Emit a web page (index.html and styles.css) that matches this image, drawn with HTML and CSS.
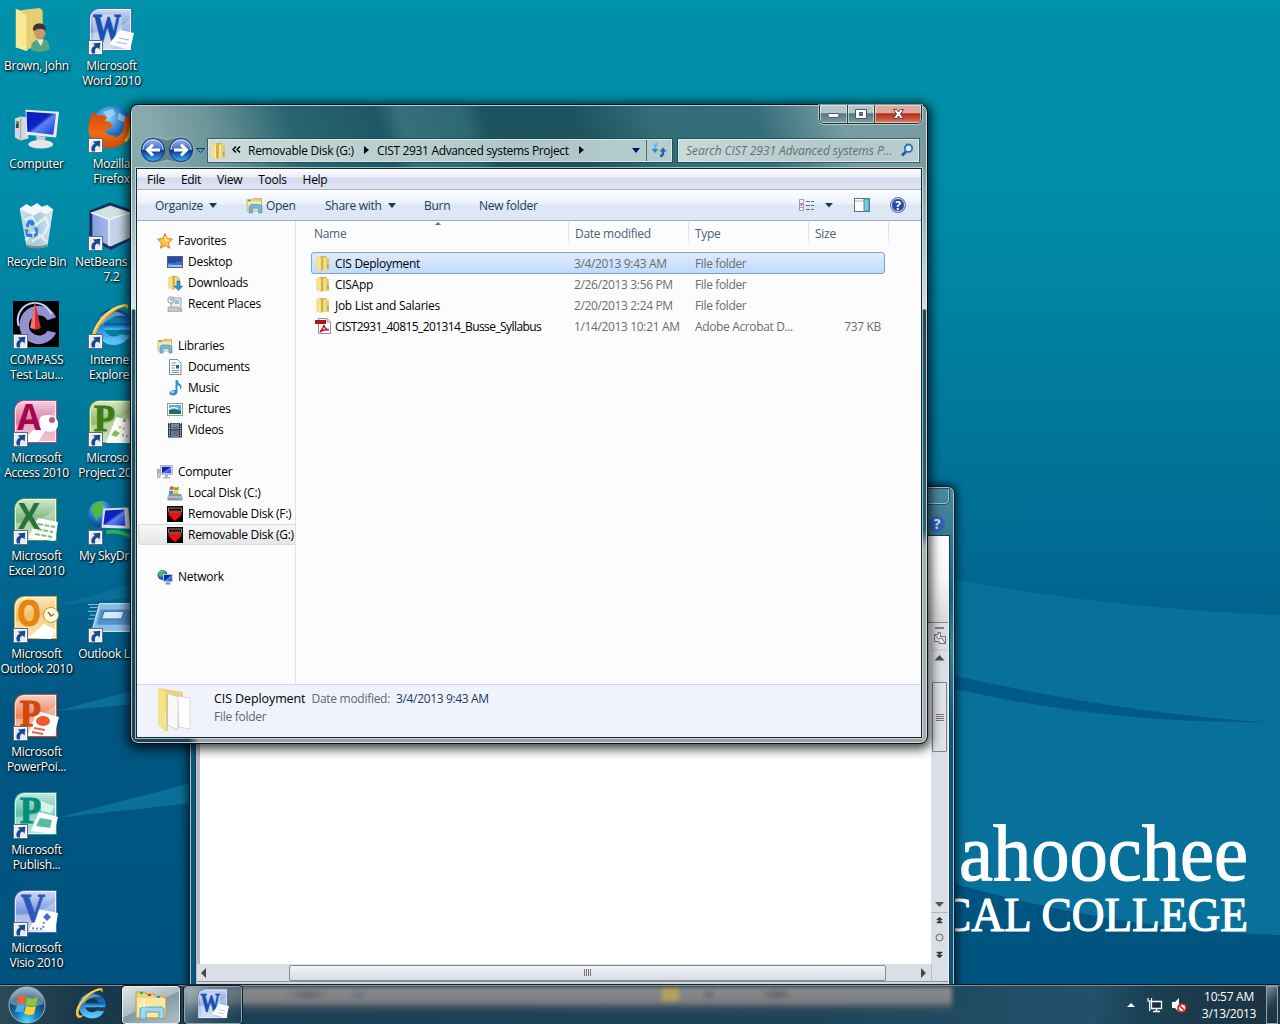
FILE: index.html
```html
<!DOCTYPE html>
<html lang="en">
<head>
<meta charset="utf-8">
<title>Desktop</title>
<link rel="stylesheet" href="styles.css">
</head>
<body>
<svg class="defs" width="0" height="0" aria-hidden="true">
<defs>
<linearGradient id="gSheen" x1="0" y1="0" x2="0" y2="1"><stop offset="0" stop-color="#fff" stop-opacity=".75"/><stop offset=".5" stop-color="#fff" stop-opacity=".3"/><stop offset="1" stop-color="#fff" stop-opacity=".55"/></linearGradient>
<linearGradient id="gFold" x1="0" y1="0" x2="1" y2="0"><stop offset="0" stop-color="#f9eca4"/><stop offset=".6" stop-color="#e8cf6b"/><stop offset="1" stop-color="#cfae43"/></linearGradient>
<linearGradient id="gScreen" x1="0" y1="0" x2="1" y2="1"><stop offset="0" stop-color="#0a1fae"/><stop offset=".45" stop-color="#0c22c8"/><stop offset=".55" stop-color="#5a86f0"/><stop offset="1" stop-color="#1331d8"/></linearGradient>
<radialGradient id="gGlobe" cx=".4" cy=".3" r=".8"><stop offset="0" stop-color="#8fd4f8"/><stop offset=".5" stop-color="#2272c4"/><stop offset="1" stop-color="#0a2a6a"/></radialGradient>
<linearGradient id="gFox" x1="0" y1="0" x2="0" y2="1"><stop offset="0" stop-color="#d9480d"/><stop offset=".6" stop-color="#ee6a14"/><stop offset="1" stop-color="#d1480c"/></linearGradient>
<linearGradient id="gE" x1="0" y1="0" x2="0" y2="1"><stop offset="0" stop-color="#0c4a86"/><stop offset=".5" stop-color="#1f86d8"/><stop offset="1" stop-color="#58c4f8"/></linearGradient>
<linearGradient id="gBtn" x1="0" y1="0" x2="0" y2="1"><stop offset="0" stop-color="#9fbfe8"/><stop offset=".48" stop-color="#3c6cc0"/><stop offset=".5" stop-color="#0a2f90"/><stop offset="1" stop-color="#3ab0f8"/></linearGradient>
<linearGradient id="gCubeL" x1="0" y1="0" x2="1" y2="0"><stop offset="0" stop-color="#7f9ee0"/><stop offset="1" stop-color="#d4e0f4"/></linearGradient>
<radialGradient id="gOrb" cx=".5" cy=".95" r=".9"><stop offset="0" stop-color="#4fe0ff"/><stop offset=".35" stop-color="#1a7db8"/><stop offset=".75" stop-color="#123f66"/><stop offset="1" stop-color="#6a93ad"/></radialGradient>
<linearGradient id="gBin" x1="0" y1="0" x2="1" y2="0"><stop offset="0" stop-color="#dbe8ef"/><stop offset=".5" stop-color="#b4cfdf"/><stop offset="1" stop-color="#e4eef4"/></linearGradient>

<symbol id="cut" viewBox="0 0 15 15"><rect x=".5" y=".5" width="14" height="14" fill="#e4ebf3" stroke="#5f6b7c"/><rect x="1.5" y="1.5" width="12" height="12" fill="none" stroke="#fafcff"/><path d="M4 13.5C2.600 9.500 4 6.800 6.800 5.700L5 3.400 12.300 2.700 11.600 9.500 9.600 7.600C7 8.400 6.600 10.300 7.200 13.500Z" fill="#1d4690"/></symbol>
<symbol id="tile" viewBox="0 0 46 46"><path d="M11 1H44V44H1V11Q2 2 11 1Z" fill="currentColor"/><path d="M11.500 2H43V43H2V11.500Q3 3 11.500 2Z" fill="url(#gSheen)"/><path d="M11.500 2.500H42.500V42.500H2.500V11.500Q3 3 11.500 2.500Z" fill="none" stroke="#fff" stroke-opacity=".75"/><path d="M2 26Q26 26 43 12V43H2Z" fill="#fff" opacity=".3"/></symbol>
<symbol id="folder" viewBox="0 0 16 16"><path d="M1.500 2L6 .5 9 2V15L4 15.500 1.500 14Z" fill="#f0dc84"/><path d="M5.500 1H11.500V14.500L5.500 15.500Z" fill="#d3b346"/><path d="M8.500 2L13.500 3 14 14.500 8.500 15.500Z" fill="url(#gFold)"/><path d="M1.500 2L5.500 3.500V15.500L1.500 14Z" fill="#f3e08a"/><path d="M5 3V15" stroke="#fbf2b8" stroke-width=".8"/><rect x="12.200" y="9.500" width="1.300" height="3" fill="#6fa5c8"/></symbol>
<symbol id="openfolder" viewBox="0 0 16 16"><path d="M1 2.500H6L7 1.500H14.500V13H1Z" fill="#e7d27c" stroke="#bfa24a" stroke-width=".7"/><rect x="1.500" y="4" width="12.500" height="8.500" fill="#f8eba8"/><rect x="2" y="2.800" width="2.500" height="1.200" fill="#38b749"/><path d="M3 15V8.500L5 7H12L15 8.500V15H12V10.500H6V15Z" fill="#6fb9e2" stroke="#4a93c4" stroke-width=".7"/></symbol>
<symbol id="pc" viewBox="0 0 16 16"><rect x=".5" y="5.500" width="2.500" height="8" fill="#cfd4d8" stroke="#8a9095" stroke-width=".6"/><rect x=".8" y="7" width="1.200" height="2" fill="#4dbb3c"/><rect x="3.500" y="1.500" width="12" height="9" fill="#dde1e6" stroke="#9aa0a8" stroke-width=".7"/><rect x="5" y="2.800" width="9" height="6.400" fill="url(#gScreen)"/><path d="M8 11H11V13H13.500V14.500H6V13H8Z" fill="#b4b9bf"/></symbol>
<symbol id="reddisk" viewBox="0 0 16 16"><rect width="16" height="16" fill="#050505"/><path d="M1.500 5.500V2H14.500V5.500" stroke="#888" fill="none"/><path d="M2.500 3.500H13.500V5H2.500Z" fill="#900"/><path d="M1.500 7H14.500V9L8 15 1.500 9Z" fill="#f80a0a"/><path d="M1.500 6H14.500" stroke="#ccc" stroke-width=".9"/></symbol>
<symbol id="ie" viewBox="0 0 48 48"><circle cx="27" cy="27" r="14.500" fill="none" stroke="url(#gE)" stroke-width="9"/><path d="M17 23.500H44V30H17Z" fill="url(#gE)"/><path d="M33 30H47V36L31 34.500Z" fill="currentColor"/><path d="M12 17Q24 5 40 16Q28 12 14 25Z" fill="#dff3ff" opacity=".4"/><path d="M7 45C-3 35 17 5 39 3C42 3 43 5 41 9L39 6C24 8 7 28 8 39Q9 43 16 41Q11 46 7 45Z" fill="#f4bb1c"/><path d="M6 42C1 30 21 6 39 4" fill="none" stroke="#ffe684" stroke-width="1.200"/></symbol>
<symbol id="word" viewBox="0 0 46 46"><use href="#tile" width="46" height="46"/><path d="M4 12Q14 4 34 10V30L24 42H6Z" fill="#fff" opacity=".35"/><text x="5" y="34" class="letter" font-size="39" textLength="28" lengthAdjust="spacingAndGlyphs" fill="#1650b4" stroke="#1650b4">W</text><path d="M32 23L46 26 42 43 21 37Z" fill="#fff"/><path d="M31 31L41 33M29 35L39 37" stroke="#9fb0df"/></symbol>
</defs>
</svg>

<main class="desktop">
<svg class="wallpaper" width="1280" height="1024" viewBox="0 0 1280 1024">
<defs><linearGradient id="gWall" x1="0" y1="0" x2="0" y2="1"><stop offset="0" stop-color="#0091ab"/><stop offset=".2" stop-color="#008ca8"/><stop offset=".42" stop-color="#00769a"/><stop offset=".56" stop-color="#006892"/><stop offset=".7" stop-color="#005682"/><stop offset="1" stop-color="#00537f"/></linearGradient></defs>
<rect width="1280" height="1024" fill="url(#gWall)"/>
<path d="M300 560Q600 520 955 580Q1120 609 1280 615V935Q1120 930 955 884Q600 780 300 780Z" fill="#07719b"/>
<path d="M56 606L135 583V597ZM56 711L135 690V704ZM56 818L192 783V803Z" fill="#0a6f9a"/>
<path d="M900 663Q1100 712 1266 722Q1090 725 900 676Z" fill="#005a89"/>
<g class="brand" fill="#fff"><text x="959" y="880" font-size="80" textLength="289" lengthAdjust="spacingAndGlyphs">ahoochee</text><text x="941" y="931" font-size="48" textLength="307" lengthAdjust="spacingAndGlyphs">CAL COLLEGE</text></g>
</svg>

<div class="shortcut" style="left:0;top:0"><svg viewBox="0 0 48 48"><path d="M3 2L15 6V46L3 42Z" fill="#f7e9a0"/><path d="M9 3L28 1 31 4V38L13 45Z" fill="#e6cd72"/><path d="M3 2L14 9V46L3 42Z" fill="#f8e996"/><path d="M19 45Q18 35 27 34L34 34Q39 37 38 44Q29 49 19 45Z" fill="#58a481"/><ellipse cx="28" cy="26" rx="6" ry="8" fill="#c79a68"/><path d="M21 25Q20 17 28 17Q36 18 34 26Q31 20 21 25Z" fill="#393634"/><path d="M25 34L29 41 32 34Z" fill="#d9efe6"/></svg><span>Brown, John</span></div>
<div class="shortcut" style="left:0;top:98px"><svg viewBox="0 0 48 48"><path d="M2 14L8 12 16 13V35L8 37 2 34Z" fill="#d4d9dd"/><path d="M8 13V36" stroke="#969ea6"/><rect x="3" y="17" width="3" height="7" fill="#3c4247"/><circle cx="4" cy="18.500" r="1" fill="#58e021"/><path d="M13 5L48 7 45 34 14 31Z" fill="#e8ebee"/><path d="M14 7L45 9 42 31 15 28Z" fill="url(#gScreen)"/><path d="M24 32L34 33 33 40H25Z" fill="#c6ccd2"/><ellipse cx="29" cy="41" rx="13" ry="4.500" fill="#e4e8eb"/></svg><span>Computer</span></div>
<div class="shortcut" style="left:0;top:196px"><svg viewBox="0 0 48 48"><path d="M7 6L42 6 36 45Q25 49 14 45Z" fill="url(#gBin)" opacity=".93"/><path d="M7 6L14 1 19 4 25 0 30 4 36 2 42 7 35 12 28 9 22 13 14 10Z" fill="#f4f8fa"/><path d="M12 18L20 14 24 23 34 15 37 24 31 34 20 31 13 39M20 40L29 35 35 40" fill="none" stroke="#fff" stroke-width="2.500" opacity=".6"/><path d="M13 24L16 18 21 18 23 22 20 24 17 22 16 26ZM12 27L16 28 15 32 20 32V36L14 35ZM22 25L26 26 26 33 22 36 22 32 24 31Z" fill="#2f7dd8"/><path d="M14 43Q25 47 36 43L35 46Q25 49 15 46Z" fill="#85898c"/></svg><span>Recycle Bin</span></div>
<div class="shortcut" style="left:0;top:294px"><svg viewBox="0 0 48 48"><rect width="48" height="48" fill="#030303"/><path d="M45 17A20 20 0 1 0 45 33L36 31A10.500 10.500 0 1 1 36 20Z" fill="#9291d2"/><path d="M40 14A18 18 0 0 0 6 26" fill="none" stroke="#d1d1fa" stroke-width="2"/><path d="M23 1L29 28Q23 32 18 28Z" fill="#cf2f2d"/><path d="M23 1L23 29 18 28Z" fill="#ee7770"/></svg><svg class="arrow"><use href="#cut"/></svg><span>COMPASS<br>Test Lau...</span></div>
<div class="shortcut access" style="left:0;top:392px"><svg viewBox="0 0 46 46"><use href="#tile" width="46" height="46"/><path d="M14 37L27 25Q24 15 36 16Q46 17 45 27Q42 35 32 32L25 43H10Z" fill="#fff"/><circle cx="39" cy="21" r="3" fill="#c85287"/><text x="4" y="31" class="letter sans" font-size="36" textLength="24" lengthAdjust="spacingAndGlyphs" fill="#a60550">A</text></svg><svg class="arrow"><use href="#cut"/></svg><span>Microsoft<br>Access 2010</span></div>
<div class="shortcut excel" style="left:0;top:490px"><svg viewBox="0 0 46 46"><use href="#tile" width="46" height="46"/><path d="M25 21L45 25 42 44 15 41Z" fill="#fff"/><path d="M25 27L42 30M24 32L40 35M22 37L39 40" stroke="#7bbd73" stroke-width="2" stroke-dasharray="5 1.500"/><text x="5" y="32" class="letter sans" font-size="36" textLength="22" lengthAdjust="spacingAndGlyphs" fill="#277236">X</text></svg><svg class="arrow"><use href="#cut"/></svg><span>Microsoft<br>Excel 2010</span></div>
<div class="shortcut outlook" style="left:0;top:588px"><svg viewBox="0 0 46 46"><use href="#tile" width="46" height="46"/><path d="M15 43L31 29 43 35 38 44Z" fill="#fff"/><circle cx="38" cy="20" r="7.500" fill="#fffbe8" stroke="#c99428"/><path d="M35 17L38 21 41 19" fill="none" stroke="#a66a0a" stroke-width="1.500"/><text x="4" y="31" class="letter sans" font-size="36" textLength="24" lengthAdjust="spacingAndGlyphs" fill="#e58512" stroke="#e58512">O</text></svg><svg class="arrow"><use href="#cut"/></svg><span>Microsoft<br>Outlook 2010</span></div>
<div class="shortcut powerpoint" style="left:0;top:686px"><svg viewBox="0 0 46 46"><use href="#tile" width="46" height="46"/><path d="M24 18L46 24 41 43 15 42Z" fill="#fff"/><ellipse cx="30" cy="28" rx="7" ry="5" fill="#f0592b"/><path d="M21 35L32 37M19 39L30 41" stroke="#e06a49" stroke-width="2"/><text x="7" y="33" class="letter" font-size="38" textLength="21" lengthAdjust="spacingAndGlyphs" fill="#d2480a" stroke="#d2480a">P</text></svg><svg class="arrow"><use href="#cut"/></svg><span>Microsoft<br>PowerPoi...</span></div>
<div class="shortcut publisher" style="left:0;top:784px"><svg viewBox="0 0 46 46"><use href="#tile" width="46" height="46"/><path d="M28 10L41 15 38 22 28 20Z" fill="#d7f3ec"/><path d="M26 21L45 26 41 43 18 40Z" fill="#fff"/><path d="M27 27L39 29 37 37 23 35Z" fill="#57bca5"/><text x="7" y="32" class="letter" font-size="38" textLength="21" lengthAdjust="spacingAndGlyphs" fill="#078c77" stroke="#078c77">P</text></svg><svg class="arrow"><use href="#cut"/></svg><span>Microsoft<br>Publish...</span></div>
<div class="shortcut visio" style="left:0;top:882px"><svg viewBox="0 0 46 46"><use href="#tile" width="46" height="46"/><path d="M25 20L45 24 42 42 16 41Z" fill="#fff"/><path d="M34 24L38 28 34 32 30 28Z" fill="#4968d8"/><path d="M31 33L30 40 17 39" fill="none" stroke="#6683de" stroke-width="2" stroke-dasharray="2 2"/><text x="8" y="32" class="letter" font-size="39" textLength="24" lengthAdjust="spacingAndGlyphs" fill="#2f55be" stroke="#2f55be">V</text></svg><svg class="arrow"><use href="#cut"/></svg><span>Microsoft<br>Visio 2010</span></div>

<div class="shortcut word" style="left:75px;top:0"><svg><use href="#word"/></svg><svg class="arrow"><use href="#cut"/></svg><span>Microsoft<br>Word 2010</span></div>
<div class="shortcut" style="left:75px;top:98px"><svg viewBox="0 0 48 48"><circle cx="25" cy="22" r="21" fill="url(#gGlobe)"/><path d="M16 7L26 4 29 9 22 14ZM32 8L39 12 38 18 31 15Z" fill="#a9dcf2" opacity=".7"/><path d="M2 16Q3 9 6 7L9 11Q17 9 20 13L17 17Q26 17 25 23L17 27Q22 33 30 32Q25 33 28 34Q39 30 37 19Q39 10 45 10Q50 31 37 41Q21 50 7 40Q-3 30 2 16Z" fill="url(#gFox)"/><path d="M39 38Q46 30 45 18" stroke="#ffd24d" stroke-width="3" fill="none"/></svg><svg class="arrow"><use href="#cut"/></svg><span>Mozilla<br>Firefox</span></div>
<div class="shortcut" style="left:75px;top:196px"><svg viewBox="0 0 48 48"><path d="M3 9L23 1 46 9V36L24 47 3 37Z" fill="url(#gCubeL)" stroke="#1b2c5f" stroke-width="3"/><path d="M3 10L23 3 44 10 22 17Z" fill="#cfe3df"/><path d="M22 17L45 10V36L23 45Z" fill="#c4d4e6"/><path d="M22 17V45M3 10L22 17 45 10" stroke="#f5faff" stroke-width="1.500" fill="none"/></svg><svg class="arrow"><use href="#cut"/></svg><span>NetBeans IDE<br>7.2</span></div>
<div class="shortcut skyie" style="left:75px;top:294px"><svg><use href="#ie"/></svg><svg class="arrow"><use href="#cut"/></svg><span>Internet<br>Explorer</span></div>
<div class="shortcut project" style="left:75px;top:392px"><svg viewBox="0 0 46 46"><use href="#tile" width="46" height="46"/><path d="M28 18L48 22V44H18Z" fill="#fff"/><path d="M27 31L32 34 28 38 23 36ZM35 20H38V23H35Z" fill="#8dba5b"/><path d="M31 28L37 30M34 36L42 38" stroke="#9ac265" stroke-width="2" stroke-dasharray="2 2"/><text x="6" y="32" class="letter" font-size="38" textLength="21" lengthAdjust="spacingAndGlyphs" fill="#3c7b18" stroke="#3c7b18">P</text></svg><svg class="arrow"><use href="#cut"/></svg><span>Microsoft<br>Project 2010</span></div>
<div class="shortcut" style="left:75px;top:490px"><svg viewBox="0 0 48 48"><circle cx="14" cy="18" r="14" fill="url(#gGlobe)"/><path d="M3 12Q9 3 17 5L14 11 18 16 11 19 9 25Z" fill="#4fba38"/><path d="M16 12L42 11 44 33 14 32Z" fill="#dce4ef"/><path d="M18 14L38 13 39 30 16 29Z" fill="url(#gScreen)"/><path d="M19 37Q31 34 46 42" stroke="#28b64c" stroke-width="4" fill="none"/></svg><svg class="arrow"><use href="#cut"/></svg><span>My SkyDrive</span></div>
<div class="shortcut" style="left:75px;top:588px"><svg viewBox="0 0 48 48"><path d="M12 9H50L44 38H4Z" fill="#8bbde4" stroke="#e3f2fd"/><path d="M13 15H50V31H9Z" fill="#4b93ce"/><path d="M17 17H38L35 25H14Z" fill="#d6e8f5" stroke="#30619a"/><path d="M0 10H12M2 13H10M0 17H9M2 21H8M0 25H7" stroke="#bce0f4" opacity=".8"/></svg><svg class="arrow"><use href="#cut"/></svg><span>Outlook Live</span></div>

<section class="wordwin">
  <div class="word-head"><span class="word-btn"></span><span class="help">?</span></div>
  <div class="word-body">
    <div class="page"></div>
    <div class="vscroll"><div class="ribbon-end"></div>
      <svg width="17" height="58" viewBox="0 0 17 58"><path d="M4 5H13" stroke="#666" stroke-width="1.500"/><path d="M3.500 11.500H7V9.500H9.500V13.500H14.500V20.500H8V18.500H3.500Z" fill="#eee6e8" stroke="#77727a"/><path d="M4 12L7.500 16 11 15 14 20" stroke="#77727a" fill="none"/><path d="M1 27H16" stroke="#bbc0ca"/><path d="M3.500 37.500L8.500 32 13.500 37.500Z" fill="#4d4e52"/></svg>
      <div class="vthumb"><i></i><i></i><i></i><i></i></div>
      <svg class="vend" width="17" height="64" viewBox="0 0 17 64"><path d="M4 2H13L8.500 7Z" fill="#55565a"/><path d="M0 12.500H17" stroke="#b2b8c2"/><path d="M5.500 20L8.500 17 11.500 20ZM5.500 23L8.500 20 11.500 23ZM5.500 52L8.500 55 11.500 52ZM5.500 55L8.500 58 11.500 55Z" fill="#333" stroke="#333" stroke-width=".4"/><circle cx="8.500" cy="37.500" r="3.500" fill="#d6d9df" stroke="#66686c"/></svg>
    </div>
    <div class="hscroll"><b class="tri-l"></b><div class="hthumb"><i></i><i></i><i></i><i></i></div><b class="tri-r"></b></div>
    <div class="corner"></div>
  </div>
</section>

<section class="explorer">
  <header class="caption">
    <div class="winbtns"><span class="min"><svg viewBox="0 0 28 18"><rect x="8.500" y="8.500" width="11" height="4" rx="1" fill="#fff" stroke="#4a565c"/></svg></span><span class="max"><svg viewBox="0 0 26 18"><path d="M7.500 4.500H18.500V13.500H7.500ZM11.500 7.500H14.500V10.500H11.500Z" fill="#fff" fill-rule="evenodd" stroke="#4a565c"/></svg></span><span class="close"><svg viewBox="0 0 46 18"><path d="M18.500 4.500H21.500L23.500 7 25.500 4.500H28.500L25.500 9 28.500 13.500H25.500L23.500 11 21.500 13.500H18.500L21.500 9Z" fill="#fff" stroke="#4a4a55"/></svg></span></div>
    <div class="nav">
      <svg class="navbtns" width="68" height="28" viewBox="0 0 68 28"><path d="M14 1Q20 1 28 4 36 1 42 1A13 13 0 0 1 42 27Q36 27 28 24 20 27 14 27A13 13 0 0 1 14 1Z" fill="#173d48" opacity=".35" stroke="#c3d8da"/><g stroke="#15357b"><circle cx="14" cy="14" r="11.500" fill="url(#gBtn)"/><circle cx="42" cy="14" r="11.500" fill="url(#gBtn)"/></g><path d="M3.800 14A10.200 10.200 0 0 1 24.200 14M31.800 14A10.200 10.200 0 0 1 52.200 14" fill="none" stroke="#d5e6ff" opacity=".8"/><path d="M21 14H9M14 8.500L8.500 14 14 19.500M35 14H47M42 8.500L47.500 14 42 19.500" fill="none" stroke="#fff" stroke-width="3"/><path d="M57.500 12.500H65.500L61.500 16.500Z" fill="#4aa9df" stroke="#103c57"/></svg>
      <div class="address"><svg width="17" height="17"><use href="#folder"/></svg><svg class="chev" width="9" height="8" viewBox="0 0 9 8"><path d="M4 .5L1 3.500 4 6.500M8 .5L5 3.500 8 6.500" fill="none" stroke="#000" stroke-width="1.500"/></svg><span class="crumb1">Removable Disk (G:)</span><b class="tri-r small"></b><span class="crumb2">CIST 2931 Advanced systems Project</span><b class="tri-r small"></b><b class="tri-d navy"></b><span class="refresh"><svg width="16" height="16" viewBox="0 0 16 16"><path d="M6.500 2Q4 2 4 5V7" fill="none" stroke="#62b8ec" stroke-width="2.400"/><path d="M.5 7H7.500L4 11Z" fill="#2f86d0"/><path d="M9 14Q12 14 12 11V9" fill="none" stroke="#2463b8" stroke-width="2.400"/><path d="M8.500 9.500H15.500L12 5.500Z" fill="#2463b8"/></svg></span></div>
      <div class="search"><em>Search CIST 2931 Advanced systems P...</em><svg width="14" height="14" viewBox="0 0 14 14"><path d="M6.500 8L2 12.500" stroke="#1d5ba8" stroke-width="2.600"/><circle cx="8.500" cy="5.200" r="3.700" fill="#dcebf0" stroke="#2670bd" stroke-width="1.800"/></svg></div>
    </div>
  </header>
  <div class="client">
    <nav class="menubar"><span>File</span><span>Edit</span><span>View</span><span>Tools</span><span>Help</span></nav>
    <div class="toolbar"><span class="t1">Organize <b class="tri-d"></b></span><span class="t2"><svg width="17" height="17"><use href="#openfolder"/></svg>Open</span><span class="t3">Share with <b class="tri-d"></b></span><span class="t4">Burn</span><span class="t5">New folder</span>
      <svg class="tools" width="110" height="18" viewBox="0 0 110 18"><path d="M.5 3.500H4.500V14.500H.5ZM.5 7.500H4.500M.5 11.500H4.500" fill="#fff" stroke="#9a9faf"/><circle cx="2.500" cy="9" r="1" fill="#d33"/><path d="M7 5.500H15M7 9.500H15M7 13.500H15" stroke="#667085" stroke-dasharray="4 1"/><path d="M26 7H34L30 11.500Z" fill="#1e395b"/><rect x="55.500" y="2.500" width="15" height="13" fill="#fff" stroke="#617286"/><path d="M56 5H65" stroke="#a7b6c5"/><rect x="65" y="3" width="5" height="12" fill="#78c9dc" stroke="#3d91a8"/><circle cx="99" cy="9" r="7.500" fill="#2747ae" stroke="#777d85"/><circle cx="99" cy="9" r="6.500" fill="none" stroke="#dbe0f0"/><text x="99" y="13.500" text-anchor="middle" class="q">?</text></svg>
    </div>
    <div class="main">
      <aside class="tree">
        <div class="node"><svg viewBox="0 0 16 16"><path d="M8 .5L10.200 5.500 15.500 6.200 11.500 10 12.500 15.200 8 12.500 3.500 15.200 4.500 10 .5 6.200 5.800 5.500Z" fill="#fbc63e" stroke="#e0782c"/><path d="M8 2.500L9.500 6.500 13 7 8 9Z" fill="#fff2a4"/></svg>Favorites</div>
        <div class="node sub"><svg viewBox="0 0 16 16"><rect x=".5" y="2.500" width="15" height="11" fill="#3d6fd0" stroke="#5a6068"/><path d="M1 3H15V7L1 10Z" fill="#234ba7"/><path d="M1 12H15" stroke="#c5dced" stroke-width="1.500"/><circle cx="3" cy="11" r="1.700" fill="#49b1e5"/></svg>Desktop</div>
        <div class="node sub"><svg viewBox="0 0 16 16"><use href="#folder" width="15" height="15"/><path d="M10 6H13V11H15.500L11.500 15.500 7.500 11H10Z" fill="#2d93dc" stroke="#1767a5" stroke-width=".6"/></svg>Downloads</div>
        <div class="node sub"><svg viewBox="0 0 16 16"><path d="M4 2H14V12H4Z" fill="#e7eef2" stroke="#8ba0ab"/><path d="M1 11H11V13H15V15.500H1Z" fill="#c3c8cb" stroke="#8f969b" stroke-width=".6"/><circle cx="4" cy="4" r="3.200" fill="#f2f5f7" stroke="#8998a2"/><path d="M4 2V4H6M8 5H12M8 7H12" stroke="#5d819c" fill="none"/></svg>Recent Places</div>
        <div class="node gap"></div>
        <div class="node"><svg><use href="#openfolder"/></svg>Libraries</div>
        <div class="node sub"><svg viewBox="0 0 16 16"><path d="M2.500 .5H10.500L14 4V15.500H2.500Z" fill="#fff" stroke="#7d8b94"/><path d="M4.500 4H9M4.500 6.500H8M4.500 9H8M4.500 11.500H12M4.500 13.500H12" stroke="#7993ac"/><rect x="9" y="6" width="3" height="3.500" fill="#235bb0"/></svg>Documents</div>
        <div class="node sub"><svg viewBox="0 0 16 16"><path d="M8.500 0H10.500Q11 3 14 5Q15.500 8 13 10Q14 6 10.500 5V12Q10 15.500 5.500 15.500Q1.500 15 2.500 12Q4.500 9.500 8.500 10Z" fill="#2e91d1"/><ellipse cx="5.500" cy="12" rx="2" ry="1.300" fill="#9bd2f3"/></svg>Music</div>
        <div class="node sub"><svg viewBox="0 0 16 16"><rect x=".5" y="2.500" width="15" height="12" fill="#fff" stroke="#919ba2"/><rect x="2" y="4" width="12" height="9" fill="#5aafe0"/><path d="M2 9Q8 7 14 10V13H2Z" fill="#216d5e"/><path d="M2 8Q7 5 11 8" stroke="#e7f5fc" fill="none" stroke-width="1.500"/></svg>Pictures</div>
        <div class="node sub"><svg viewBox="0 0 16 16"><rect x="1" y="1" width="14" height="14.500" fill="#263139"/><rect x="4" y="1.500" width="8" height="6" fill="#5697cb"/><rect x="4" y="8.500" width="8" height="6.500" fill="#4982b5"/><path d="M2.500 1V15.500M13.500 1V15.500" stroke="#e1e8ed" stroke-width="1.200" stroke-dasharray="1.200 1.200"/><path d="M5 3L8 5 11 3V7H6ZM7 10L10 9 11 14 7 13Z" fill="#9e5947"/></svg>Videos</div>
        <div class="node gap"></div>
        <div class="node"><svg><use href="#pc"/></svg>Computer</div>
        <div class="node sub"><svg viewBox="0 0 16 16"><path d="M2 9H14L15.500 12V15.500H.5V12Z" fill="#8b989e"/><path d="M1 12H15" stroke="#d0dadd"/><path d="M3 2Q5 .5 7 2L6.500 5Q4.500 4 2.500 5Z" fill="#e8562a"/><path d="M7.500 2Q10 3 12 1.500L11.500 5Q9 6 7 5Z" fill="#77b92b"/><path d="M2 6Q4.500 5 6.500 6L6 9H2Z" fill="#3598d9"/><path d="M7 6Q9 7 11.500 6L11 9H6.500Z" fill="#f5bd20"/><rect x="12" y="13" width="2" height="1.500" fill="#54d5de"/></svg>Local Disk (C:)</div>
        <div class="node sub"><svg><use href="#reddisk"/></svg>Removable Disk (F:)</div>
        <div class="node sub current"><svg><use href="#reddisk"/></svg>Removable Disk (G:)</div>
        <div class="node gap"></div>
        <div class="node"><svg viewBox="0 0 16 16"><circle cx="5.500" cy="6" r="5" fill="url(#gGlobe)"/><path d="M2 4Q5 1 8 2L6 5 3 8Z" fill="#54b941"/><rect x="6.500" y="5.500" width="9" height="7" fill="url(#gScreen)" stroke="#c4ccda"/><path d="M9 13H13V14.500H14V15.500H8V14.500H9Z" fill="#9199aa"/></svg>Network</div>
      </aside>
      <div class="files">
        <div class="row head"><span>Name</span><span>Date modified</span><span>Type</span><span>Size</span><i class="sort"></i></div>
        <div class="row selected"><span><svg><use href="#folder"/></svg>CIS Deployment</span><span>3/4/2013 9:43 AM</span><span>File folder</span><span></span></div>
        <div class="row"><span><svg><use href="#folder"/></svg>CISApp</span><span>2/26/2013 3:56 PM</span><span>File folder</span><span></span></div>
        <div class="row"><span><svg><use href="#folder"/></svg>Job List and Salaries</span><span>2/20/2013 2:24 PM</span><span>File folder</span><span></span></div>
        <div class="row"><span class="long"><svg viewBox="0 0 16 16"><path d="M3.500 .5H12L15.500 4V15.500H3.500Z" fill="#fff" stroke="#929292"/><path d="M12 .5V4H15.500" fill="#ddd" stroke="#999"/><rect y="2" width="11" height="4" fill="#b3121d"/><path d="M5 14Q8 11 9 7Q9.500 11 14 12Q9 11 5 14Z" fill="none" stroke="#c01b25" stroke-width="1.400"/></svg>CIST2931_40815_201314_Busse_Syllabus</span><span>1/14/2013 10:21 AM</span><span>Adobe Acrobat D...</span><span>737 KB</span></div>
      </div>
    </div>
    <footer class="details"><svg width="36" height="46" viewBox="0 0 36 46"><path d="M2 1L26 5V12L10 14Z" fill="#e9d27b"/><path d="M20 9L33 11V42L22 40Z" fill="#fff" stroke="#c9ccd2" stroke-width=".7"/><path d="M10 6L21 10V43L10 38Z" fill="#f9f9f8" stroke="#bbb" stroke-width=".6"/><path d="M1 1L10 6V25L8 27 9 45 1 38Z" fill="#f6e388"/><path d="M10 7V44" stroke="#c3a95b"/></svg><div><p><strong>CIS Deployment</strong><span>Date modified:</span><em>3/4/2013 9:43 AM</em></p><p><span>File folder</span></p></div></footer>
  </div>
</section>

<footer class="taskbar">
  <div class="blurred"></div>
  <svg class="orb" viewBox="0 0 40 40"><circle cx="20" cy="20" r="18" fill="url(#gOrb)" stroke="#98b7c6"/><path d="M3 19A17 17 0 0 1 37 19Q20 25 3 19Z" fill="#d5e6ee" opacity=".38"/><path d="M11 12Q15 9 19 12L18 19Q14 17 10 19Z" fill="#f0642c"/><path d="M20 12.500Q25 15 31 12L29 20Q24 22 19 19.500Z" fill="#8cc83c"/><path d="M10 20.500Q14 18 18 20.500L16 28Q12 26 8 27Z" fill="#4eabe6"/><path d="M19 21Q24 23 29 21L27 29Q22 31 17 28.500Z" fill="#fdd03b"/></svg>
  <svg class="tie" viewBox="0 0 48 48"><use href="#ie"/></svg>
  <div class="task active"><svg width="34" height="32" viewBox="0 0 34 32"><path d="M2 3H11L12 5H20L21 7H29L30 9H32V29H2Z" fill="#e9d477" stroke="#b99f4b"/><path d="M3 9H31V28H3Z" fill="#f8e9a0"/><path d="M6 4H9" stroke-width="2" stroke="#35ad40"/><path d="M14 6H17" stroke="#d53d2f" stroke-width="2"/><path d="M23 8H26" stroke="#2c8fd8" stroke-width="2"/><path d="M6 30V20L8 18H28L30 20V30H25V23H12V30Z" fill="#9dd8ee" stroke="#609fbd"/><path d="M10 10V20M5 17H15" stroke="#fff" opacity=".8"/></svg></div>
  <div class="task word"><svg width="32" height="32" viewBox="0 0 46 46"><use href="#word" width="46" height="46"/></svg></div>
  <div class="tray">
    <b class="tri-u"></b>
    <svg width="16" height="16" viewBox="0 0 16 16"><path d="M4.500 4.500H14.500V11.500H4.500ZM9.500 12V14.500M6 14.500H13" fill="#1b2f3b" stroke="#fff" stroke-width="1.300"/><path d="M1 1V4H4.500V1M2.700 4V14" fill="none" stroke="#fff" stroke-width="1.200"/></svg>
    <svg width="16" height="16" viewBox="0 0 16 16"><path d="M1 5H4L8 1V15L4 11H1Z" fill="#fff"/><circle cx="11" cy="11" r="4" fill="#fff" stroke="#e31b1b" stroke-width="1.700"/><path d="M8.500 8.500L13.500 13.500" stroke="#e31b1b" stroke-width="1.700"/></svg>
    <div class="clock">10:57 AM<br>3/13/2013</div>
    <div class="peek"></div>
  </div>
</footer>
</main>
</body>
</html>
```
FILE: styles.css
```css
* { box-sizing: border-box; }
body { margin: 0; font: 12px/15px "Open Sans", "Noto Sans", sans-serif; letter-spacing: -.28px; color: #000; }
p { margin: 0; }
.defs { position: absolute; }
.desktop { position: relative; width: 1280px; height: 1024px; overflow: hidden; background: #00537f; }
.wallpaper { display: block; }
.brand { font-family: "Liberation Serif", serif; letter-spacing: 0; }
.brand text { stroke: #fff; stroke-width: 1.1px; }
.letter { font-family: "Liberation Serif", serif; font-weight: bold; letter-spacing: 0; }
.letter.sans { font-family: "Open Sans", sans-serif; }
symbol { overflow: visible; }

/* desktop shortcuts */
.shortcut { position: absolute; width: 74px; padding-top: 7px; color: #fff; text-align: center; }
.shortcut > svg { display: block; width: 46px; height: 46px; margin: 0 0 5px 13px; overflow: visible; }
.shortcut > svg.arrow { position: absolute; left: 13px; top: 40px; width: 15px; height: 15px; margin: 0; }
.shortcut > span { display: block; white-space: nowrap; margin: 0 -9px 0 -10px; text-shadow: 1px 1px 2px #000, 0 1px 3px rgba(0,0,0,.8); }
.access { color: #d0447f; }
.excel { color: #4a9c48; }
.outlook { color: #eba41a; }
.powerpoint { color: #dd4d1b; }
.publisher { color: #18a48e; }
.visio { color: #456ed2; }
.project { color: #66a02d; }
.word { color: #3c6cc0; }
.skyie { color: #00799c; }
.shortcut.access span, .shortcut span { color: #fff; }

/* word window */
.wordwin { position: absolute; left: 189px; top: 486px; width: 766px; height: 520px; padding: 2px 5px 0 6px; border: 1px solid #10202c; border-radius: 7px; background: linear-gradient(#4c8b9f, #1b6285 110px, #3e809c 160px, #0c5782 240px, #075681); box-shadow: inset 0 0 0 1px #9fc2ce, 0 0 9px 2px rgba(0,0,0,.65); }
.word-head { display: flex; flex-direction: column; align-items: flex-end; height: 47px; }
.word-btn { flex: none; width: 60px; height: 15px; border: 1px solid #9cbfca; border-top: 0; border-radius: 0 0 4px 4px; outline: 1px solid #24566a; }
.help { flex: none; width: 16px; height: 16px; margin: 12px 4px 0; border-radius: 8px; background: #2f63bb; color: #dce8f8; text-align: center; font: bold 14px/16px "Open Sans", sans-serif; }
.word-body { display: grid; grid-template: 428px 20px / 1fr 17px; height: 448px; border-left: 1px solid #b9c6cf; border-right: 1px solid #eef5f7; outline: 1px solid #1f3c4c; background: #d5d8dd; }
.page { margin-left: 3px; background: #fff; box-shadow: -3px 0 #b9babe; }
.vscroll { display: flex; flex-direction: column; background: #dadee6; }
.ribbon-end { height: 87px; margin-left: -4px; background: linear-gradient(#fff, #f9f9fa 40px, #d8d8db); border-bottom: 1px solid #888; flex: none; }
.vscroll svg { flex: none; }
.vthumb { display: flex; flex-direction: column; flex: none; height: 70px; margin: 1px 1px 0 1px; border: 1px solid #7d8188; border-radius: 1px; background: #dfe2e7; align-items: center; justify-content: center; gap: 1px; }
.vthumb i { width: 8px; height: 1px; background: #777; }
.vend { margin-top: auto; }
.hscroll { display: flex; align-items: center; height: 18px; padding: 0 5px 0 4px; background: #dadee6; border-bottom: 1px solid #8c9099; }
.hthumb { display: flex; justify-content: center; align-items: center; gap: 1px; width: 597px; height: 16px; margin: 0 auto 0 83px; border: 1px solid #858991; border-radius: 2px; background: linear-gradient(#f3f5f8, #d8dce2); }
.hthumb i { width: 1px; height: 7px; background: #777; }
.corner { background: #dadee6; height: 18px; border-left: 1px solid #bbb; border-bottom: 1px solid #8c9099; }
.tri-l, .tri-r { width: 0; height: 0; border: 5px solid transparent; flex: none; }
.tri-l { border-right-color: #48494d; border-left: 0; }
.tri-r { border-left-color: #48494d; border-right: 0; }
.tri-r.small { border-width: 4px 0 4px 5px; border-left-color: #000; }
.tri-d { display: inline-block; width: 0; height: 0; border: 4px solid transparent; border-top: 5px solid #1e395b; border-bottom: 0; vertical-align: 2px; margin-left: 2px; }
.tri-u { border: 4px solid transparent; border-bottom-color: #fff; border-top: 0; }

/* explorer window */
.explorer { position: absolute; left: 130px; top: 104px; width: 798px; height: 640px; padding: 0 5px; border: 1px solid #071018; border-radius: 8px;
  background: linear-gradient(90deg, rgba(27,66,87,.9) 64px, transparent 90px) 0 100% / 100% 7px no-repeat,
    linear-gradient(#a3a1a4, #a3a1a4) 0 100% / 100% 6px no-repeat,
    linear-gradient(transparent, rgba(226,240,240,.8) 204px, transparent 205px) 0 0 / 7px 100% no-repeat,
    linear-gradient(transparent, rgba(226,240,240,.6) 204px, transparent 205px, transparent 425px, rgba(170,172,173,.95) 442px) 100% 0 / 7px 100% no-repeat,
    linear-gradient(62deg, #789fa3 0, #6a9398 120px, transparent 240px),
    linear-gradient(65deg, #1c5160 0, #1f5864 38%, #32707b 42%, #286570 50%, #1f5864 54%, #2c6a75 70%, #1f5964 76%, #286773);
  background: linear-gradient(90deg, #1b4257 58px, #a3a1a4 68px) 0 100% / 100% 6px no-repeat,
    linear-gradient(#6d9aa0, #7da3a7 63px, #d8e6e6 204px, #1d4c60 205px, #2a5d6e 300px, #1d4c60 320px, #1b4257) 0 0 / 6px 100% no-repeat,
    linear-gradient(#7da0a4, #7da3a7 63px, #d0dfe0 204px, #1d4c60 205px, #2b6478 425px, #a8acad 442px) 100% 0 / 6px 100% no-repeat,
    #255f6b;
  box-shadow: inset 0 0 0 1px rgba(230,244,244,.75), 0 2px 11px 3px rgba(0,0,0,.75); }
.explorer::before { content: ""; display: block; height: 63px; margin: 1px -4px -64px; border-radius: 6px 6px 0 0; background: linear-gradient(72deg, #87aaad 30px, #6a9398 90px, #286570 165px, #1f5864 250px, #36707b 270px, #2d6973 330px, #1d545f 350px, #1d545f 440px, #326d78 510px, #346e7a 610px, #779da3 690px); }
.caption { position: relative; height: 63px; }
.winbtns { display: flex; width: 103px; height: 19px; margin-left: 683px; border: 1px solid #1c3338; border-top: 0; border-radius: 0 0 5px 5px; overflow: hidden; box-shadow: 0 0 0 1px rgba(220,235,235,.6); }
.winbtns span { height: 18px; box-shadow: inset 0 0 0 1px rgba(255,255,255,.5); background: linear-gradient(#b4c6c9 0 45%, #56797e 48%, #7aa0a5); }
.winbtns svg { display: block; height: 18px; width: 100%; }
.min { width: 28px; border-right: 1px solid #28474c; }
.max { width: 27px; border-right: 1px solid #28474c; }
.winbtns .close { flex: 1; background: linear-gradient(#dea99a 0 45%, #b1301d 48%, #c8533a 75%, #d9836b); }
.nav { display: flex; align-items: center; height: 28px; margin-top: 12px; }
.navbtns { margin-left: 3px; flex: none; }
.address, .search { display: flex; align-items: center; height: 23px; border: 1px solid #dbe8e8; outline: 1px solid rgba(30,65,72,.65); background: linear-gradient(90deg, rgba(210,223,222,.95), rgba(181,204,205,.95) 70%, rgba(190,210,210,.95)); white-space: nowrap; }
.address { width: 464px; margin-left: 1px; padding-left: 1px; }
.chev { margin: 0 7px 0 5px; }
.crumb1 { width: 106px; margin-right: 10px; }
.crumb2 { width: 192px; margin: 0 10px 0 8px; letter-spacing: -.34px; }
.navy { margin-left: auto; margin-right: 6px; border-top-color: #000e63; }
.refresh { display: flex; justify-content: center; align-items: center; width: 25px; height: 21px; border-left: 1px solid #4d6c71; }
.search { width: 241px; margin-left: 6px; padding: 0 4px 0 7px; justify-content: space-between; color: #666f70; letter-spacing: -.06px; }
.client { display: flex; flex-direction: column; height: 570px; border: 1px solid #14262e; outline: 1px solid rgba(225,240,240,.65); background: #fcfcfc; }
.menubar { display: flex; height: 21px; padding: 0 10px; gap: 16px; align-items: center; background: linear-gradient(#fdfdfe, #eceef8 8px, #d4d8ec 9px, #e3e6f5); border-bottom: 1px solid #aab2ca; }
.toolbar { display: flex; align-items: center; height: 31px; padding-left: 18px; color: #1e395b; background: linear-gradient(#fdfeff, #e9f1fb 14px, #dce6f4 15px, #dde8f6); border-bottom: 1px solid #9babc7; white-space: nowrap; flex: none; }
.toolbar span { flex: none; display: flex; align-items: center; }
.toolbar .tri-d { margin-left: 6px; }
.t1 { width: 91px; } .t2 { width: 79px; gap: 3px; } .t3 { width: 99px; } .t4 { width: 55px; }
.tools { margin: 0 12px 0 auto; }
.q { font: bold 12px "Open Sans", sans-serif; fill: #fff; }
.main { display: flex; flex: 1; min-height: 0; }
.tree { width: 159px; padding-top: 9px; border-right: 1px solid #d6e5f5; flex: none; overflow: hidden; }
.node { display: flex; align-items: center; gap: 5px; height: 21px; padding-left: 20px; white-space: nowrap; }
.node svg { width: 16px; height: 16px; flex: none; }
.node.sub { padding-left: 30px; }
.node.current { margin-left: 1px; padding-left: 28px; border: 1px solid #dadada; border-right: 0; border-radius: 3px 0 0 3px; background: linear-gradient(#f8f8f8, #e6e6e6); }
.files { flex: 1; padding-left: 15px; }
.row { position: relative; display: grid; grid-template-columns: 257px 121px 120px 76px; width: 574px; height: 21px; line-height: 21px; padding-top: 1px; white-space: nowrap; color: #6d6d6d; letter-spacing: -.36px; }
.row span { padding-left: 6px; height: 20px; }
.row span:first-child { display: flex; align-items: center; gap: 4px; padding-left: 4px; color: #000; letter-spacing: -.3px; }
.row span.long:first-child { letter-spacing: -.58px; }
.row span:nth-child(4) { text-align: right; padding-right: 4px; }
.row svg { width: 16px; height: 16px; }
.row.head { height: 25px; grid-template-columns: 258px 120px 120px 80px; margin-bottom: 6px; color: #4c607a; line-height: 24px; letter-spacing: -.28px; }
.row.head span { height: 24px; border-right: 1px solid; border-image: linear-gradient(#d5e4f5, #d5e4f5 60%, transparent) 1; }
.row.head span:first-child { color: #4c607a; padding-left: 3px; }
.row.head span:nth-child(4) { text-align: left; }
.sort { position: absolute; left: 124px; top: 1px; border: 3px solid transparent; border-top: 0; border-bottom: 3px solid #4c7791; }
.selected::before { content: ""; position: absolute; inset: 0 0 -1px; z-index: -1; border: 1px solid #7da2ce; border-radius: 3px; background: linear-gradient(#dfebfc, #c1dbfc); }
.row.selected { z-index: 0; }
.details { display: flex; height: 53px; padding: 2px 20px; gap: 21px; background: #f0f3fb; border-top: 1px solid #ccd9ea; flex: none; color: #5a6779; }
.details p { height: 18px; margin-top: 4px; display: flex; gap: 6px; }
.details p + p { margin-top: 0; }
.details strong { font-weight: 400; font-size: 12.5px; color: #000; letter-spacing: -.1px; }
.details em { font-style: normal; color: #1e395b; letter-spacing: -.35px; }

/* taskbar */
.taskbar { position: absolute; left: 0; top: 984px; width: 1280px; height: 40px; display: flex; align-items: center; border-top: 1px solid #10181d; box-shadow: inset 0 1px #77909d; background: linear-gradient(100deg, #2c4b59 0, #183647 90px, #1c4055 180px, #1d4459 800px, #24506a 1080px, #1b4054 1130px, #1c3442 1240px); }
.blurred { position: absolute; left: 186px; top: 2px; width: 766px; height: 32px; filter: blur(2px);
  background: linear-gradient(#b3a160, #b3a160) 476px 0 / 17px 14px no-repeat,
    radial-gradient(closest-side, rgba(60,62,66,.6), transparent) 574px 2px / 34px 11px no-repeat,
    radial-gradient(closest-side, rgba(60,62,66,.5), transparent) 516px 2px / 14px 11px no-repeat,
    radial-gradient(closest-side, rgba(60,62,66,.5), transparent) 96px 2px / 50px 11px no-repeat,
    radial-gradient(closest-side, rgba(70,80,140,.5), transparent) 162px 2px / 20px 11px no-repeat,
    linear-gradient(#8b8c8e, #7d7f82 15px, rgba(65,83,95,.6) 21px, transparent 29px); }
.orb { width: 40px; height: 40px; margin-left: 7px; flex: none; }
.tie { width: 34px; height: 34px; margin: -3px 15px 0 26px; color: #1c4055; }
.task { position: relative; display: flex; align-items: center; justify-content: center; width: 58px; height: 38px; margin-top: 1px; border: 1px solid #94a3aa; border-radius: 3px; outline: 1px solid #0c2029; background: linear-gradient(135deg, rgba(185,197,202,.7), rgba(80,110,124,.45) 50%, rgba(30,60,75,.6)); }
.task.active { border-color: #eaf0f2; background: linear-gradient(155deg, #e0e5e8, #aebbc1 48%, #839aa4 50%, #b2c0c7); margin-right: 4px; }
.task.word svg { margin-top: -3px; overflow: visible; }
.tray { display: flex; align-items: center; margin-left: auto; height: 39px; color: #fff; }
.tray svg { margin-left: 8px; }
.tray .tri-u { margin-right: 4px; }
.clock { width: 70px; margin-left: 7px; text-align: center; line-height: 17px; }
.peek { width: 12px; height: 38px; margin: 0 2px 0 2px; border: 1px solid #91a2aa; background: linear-gradient(135deg, #778b95, #243e4c 50%, #1b303b); }
```
